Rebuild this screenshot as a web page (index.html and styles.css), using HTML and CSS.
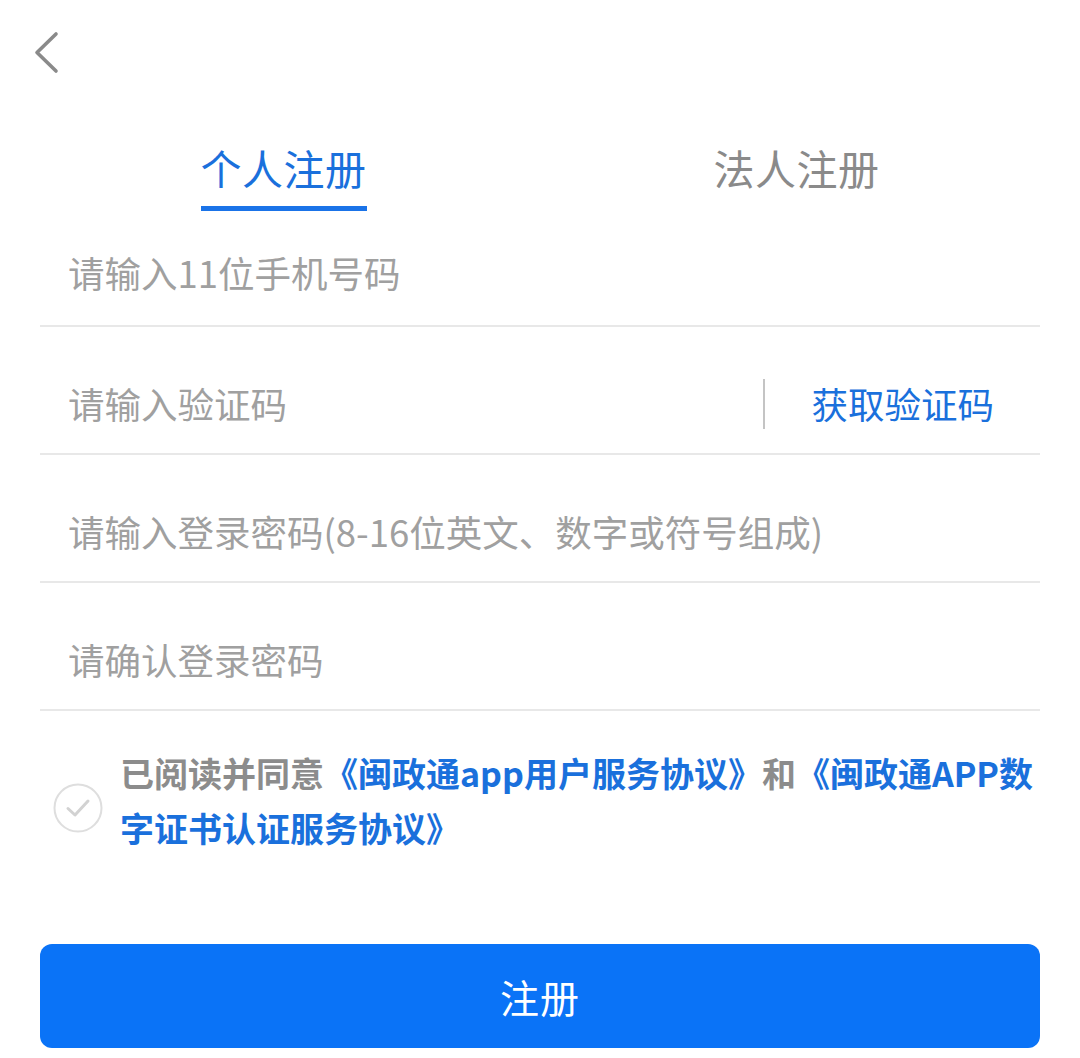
FILE: index.html
```html
<!DOCTYPE html>
<html lang="zh-CN">
<head>
<meta charset="utf-8">
<title>注册</title>
<link rel="stylesheet" href="styles.css">
</head>
<body>
<div class="page">
  <header class="topbar">
    <svg class="back" width="30" height="44" viewBox="0 0 30 44" aria-hidden="true">
      <polyline points="22,3 3,21.5 22,40" fill="none" stroke="#8a8a8a" stroke-width="3.6" stroke-linecap="round" stroke-linejoin="round"/>
    </svg>
  </header>

  <nav class="tabs">
    <div class="tab active"><span class="tab-label">个人注册</span></div>
    <div class="tab"><span class="tab-label">法人注册</span></div>
  </nav>

  <form class="form">
    <div class="row first"><span class="placeholder">请输入11位手机号码</span></div>
    <div class="row">
      <span class="placeholder grow">请输入验证码</span>
      <span class="vsep"></span>
      <span class="code-btn">获取验证码</span>
    </div>
    <div class="row"><span class="placeholder">请输入登录密码(8-16位英文、数字或符号组成)</span></div>
    <div class="row"><span class="placeholder">请确认登录密码</span></div>
  </form>

  <div class="agree">
    <span class="check">
      <svg width="50" height="50" viewBox="0 0 50 50" aria-hidden="true">
        <circle cx="25" cy="25" r="23.5" fill="#fff" stroke="#dedede" stroke-width="2"/>
        <polyline points="15,25.5 22,32 35,18" fill="none" stroke="#d2d2d2" stroke-width="3" stroke-linecap="round" stroke-linejoin="round"/>
      </svg>
    </span>
    <p class="agree-text"><span class="line">已阅读并同意<span class="link">《闽政通app用户服务协议》</span>和<span class="link">《闽政通APP数</span></span><br><span class="link">字证书认证服务协议》</span></p>
  </div>

  <div class="submit-wrap">
    <button class="submit" type="button">注册</button>
  </div>
</div>
</body>
</html>
```

FILE: styles.css
```css
* {
  box-sizing: border-box;
}

html, body {
  margin: 0;
  padding: 0;
  background: #ffffff;
}

body {
  font-family: "Noto Sans CJK SC", "Noto Sans", "Liberation Sans", sans-serif;
  color: #333;
}

.page {
  width: 1080px;
  height: 1058px;
  overflow: hidden;
}

.topbar {
  height: 140px;
  padding: 31px 0 0 34px;
}

.back {
  display: block;
}

.tabs {
  display: flex;
  padding: 0 27px;
  height: 71px;
}

.tab {
  flex: 1;
  display: flex;
  justify-content: center;
}

.tab-label {
  display: block;
  font-size: 41px;
  line-height: 54px;
  padding-bottom: 12px;
  color: #8a8a8a;
  letter-spacing: 0.5px;
}

.tab.active .tab-label {
  color: #1a70dc;
  border-bottom: 5px solid #1a73e8;
}

.form {
  margin: 0 40px;
}

.row {
  display: flex;
  align-items: center;
  height: 128px;
  padding: 27px 0 0 28px;
  border-bottom: 2px solid #e8e8e8;
}

.row.first {
  height: 116px;
  padding-top: 18px;
  padding-bottom: 8px;
}

.placeholder {
  font-size: 36.5px;
  line-height: 50px;
  color: #a0a0a0;
}

.grow {
  flex: 1;
}

.vsep {
  width: 2px;
  height: 50px;
  background: #c4c4c4;
  margin-right: 47px;
}

.code-btn {
  font-size: 36.5px;
  line-height: 50px;
  color: #1a70dc;
  margin-right: 46px;
}

.agree {
  display: flex;
  align-items: center;
  padding: 34px 20px 0 53px;
}

.check {
  flex: none;
  width: 50px;
  height: 50px;
  margin-right: 17px;
  margin-top: 15px;
}

.check svg {
  display: block;
}

.agree-text {
  margin: 0;
  font-size: 34px;
  line-height: 55px;
  font-weight: 700;
  color: #8c8c8c;
  white-space: nowrap;
}

.link {
  color: #1a70dc;
}

.submit-wrap {
  padding: 89px 40px 0;
}

.submit {
  display: block;
  width: 100%;
  height: 104px;
  border: 0;
  border-radius: 12px;
  background: #0a73f7;
  color: #ffffff;
  font-family: "Noto Sans CJK SC", "Noto Sans", sans-serif;
  font-size: 39px;
  letter-spacing: 1px;
  cursor: pointer;
}
```
